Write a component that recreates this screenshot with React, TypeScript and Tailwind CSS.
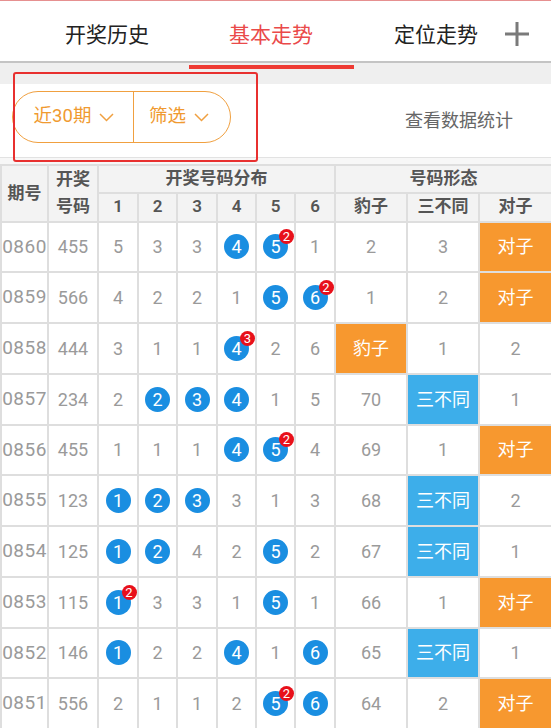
import React from "react";

type Row = {
  q: string;
  n: string;
  miss: number[];
  shape: (number | string)[];
};

// 0 in miss = drawn number (shown as ball)
const rows: Row[] = [
  { q: "0860", n: "455", miss: [5, 3, 3, 0, 0, 1], shape: [2, 3, "dz"] },
  { q: "0859", n: "566", miss: [4, 2, 2, 1, 0, 0], shape: [1, 2, "dz"] },
  { q: "0858", n: "444", miss: [3, 1, 1, 0, 2, 6], shape: ["bz", 1, 2] },
  { q: "0857", n: "234", miss: [2, 0, 0, 0, 1, 5], shape: [70, "sbt", 1] },
  { q: "0856", n: "455", miss: [1, 1, 1, 0, 0, 4], shape: [69, 1, "dz"] },
  { q: "0855", n: "123", miss: [0, 0, 0, 3, 1, 3], shape: [68, "sbt", 2] },
  { q: "0854", n: "125", miss: [0, 0, 4, 2, 0, 2], shape: [67, "sbt", 1] },
  { q: "0853", n: "115", miss: [0, 3, 3, 1, 0, 1], shape: [66, 1, "dz"] },
  { q: "0852", n: "146", miss: [0, 2, 2, 0, 1, 0], shape: [65, "sbt", 1] },
  { q: "0851", n: "556", miss: [2, 1, 1, 2, 0, 0], shape: [64, 2, "dz"] },
];

const font = { fontFamily: 'Roboto, "Noto Sans CJK SC", sans-serif' };

function Chevron() {
  return (
    <svg width="15" height="9" viewBox="0 0 15 9" className="ml-[8px] mt-[1px]">
      <polyline points="1,1 7.5,7.5 14,1" fill="none" stroke="#f0a040" strokeWidth="1.5" />
    </svg>
  );
}

function Ball({ num, count }: { num: number; count: number }) {
  return (
    <div className="relative mx-auto w-[25px] h-[25px] rounded-full bg-[#1a8ee1] text-white text-[18px] leading-[25px] text-center">
      {num}
      {count > 1 && (
        <span className="absolute left-[16px] top-[-5px] w-[15px] h-[15px] rounded-full bg-[#e8101a] text-white text-[13px] leading-[15px] text-center">
          {count}
        </span>
      )}
    </div>
  );
}

export default function App() {
  const th = "border-2 border-[#dedede] bg-[#f3f3f3] text-[#555] font-semibold text-[17px] p-0";
  const td = "border-2 border-[#dedede] text-[#9a9a9a] text-[18px] text-center p-0";
  return (
    <div className="relative w-[551px] h-[728px] overflow-hidden bg-white" style={font}>
      <div className="h-px bg-[#e69090]" />
      {/* tabs */}
      <div className="flex items-center h-[62px] pt-[9px] pl-[25px] text-[21px] border-b-2 border-[#c4c4c4]">
        <div className="w-[164px] text-center text-[#222]">开奖历史</div>
        <div className="w-[164px] text-center text-[#ea4a4a]">基本走势</div>
        <div className="w-[150px] pl-[41px] text-[#222]">定位走势</div>
        <svg width="28" height="28" viewBox="0 0 28 28" className="mt-[-3px]">
          <path d="M14 2v24M2 14h24" stroke="#7a7a7a" strokeWidth="3" />
        </svg>
      </div>
      <div className="h-[21px] bg-[#efefef] pt-[2px] pl-[189px]">
        <div className="w-[165px] h-[4px] bg-[#ee3a33]" />
      </div>
      {/* filters */}
      <div className="flex items-start h-[74px] pt-[7px] border-b border-[#e2e2e2]">
        <div className="ml-[12px] flex h-[52px] w-[219px] rounded-full border-[1.5px] border-[#f0a040] text-[#f09a30] text-[18.5px]">
          <div className="flex items-center justify-center w-[121px] border-r-[1.5px] border-[#f0a040] pl-[2px]">
            近30期
            <Chevron />
          </div>
          <div className="flex items-center justify-center flex-1 pr-[6px]">
            筛选
            <Chevron />
          </div>
        </div>
        <div className="ml-auto mr-[38px] mt-[16px] text-[18px] text-[#666]">查看数据统计</div>
      </div>
      <div className="h-[6px] bg-[#f7f7f7]" />
      {/* table */}
      <table className="table-fixed border-collapse w-[551px]">
        <colgroup>
          <col className="w-[47px]" />
          <col className="w-[50px]" />
          <col className="w-[40px]" />
          <col className="w-[39px]" />
          <col className="w-[40px]" />
          <col className="w-[39px]" />
          <col className="w-[39px]" />
          <col className="w-[40px]" />
          <col className="w-[72px]" />
          <col className="w-[72px]" />
          <col className="w-[73px]" />
        </colgroup>
        <thead>
          <tr className="h-[26px]">
            <th rowSpan={2} className={th}>期号</th>
            <th rowSpan={2} className={th + " leading-[27px]"}>
              开奖
              <br />
              号码
            </th>
            <th colSpan={6} className={th}>开奖号码分布</th>
            <th colSpan={3} className={th}>号码形态</th>
          </tr>
          <tr className="h-[29px]">
            {[1, 2, 3, 4, 5, 6].map((c) => (
              <th key={c} className={th}>{c}</th>
            ))}
            <th className={th}>豹子</th>
            <th className={th}>三不同</th>
            <th className={th}>对子</th>
          </tr>
        </thead>
        <tbody>
          {rows.map((r) => (
            <tr key={r.q} className="h-[50.75px]">
              <td className={td + " tracking-[0.5px] text-[19px]"}>{r.q}</td>
              <td className={td}>{r.n}</td>
              {r.miss.map((m, i) => {
                const count = r.n.split("").filter((d) => d === String(i + 1)).length;
                return (
                  <td key={i} className={td}>
                    {m === 0 ? <Ball num={i + 1} count={count} /> : m}
                  </td>
                );
              })}
              {r.shape.map((s, i) => {
                if (s === "dz")
                  return (
                    <td key={i} className={td + " bg-[#f7982f] text-white"}>对子</td>
                  );
                if (s === "bz")
                  return (
                    <td key={i} className={td + " bg-[#f7982f] text-white"}>豹子</td>
                  );
                if (s === "sbt")
                  return (
                    <td key={i} className={td + " bg-[#3daeea] text-white"}>三不同</td>
                  );
                return (
                  <td key={i} className={td}>{s}</td>
                );
              })}
            </tr>
          ))}
        </tbody>
      </table>
      {/* annotation box */}
      <div className="absolute left-[13px] top-[72px] w-[245px] h-[90px] border-2 border-[#e8302f] rounded-[3px]" />
    </div>
  );
}
